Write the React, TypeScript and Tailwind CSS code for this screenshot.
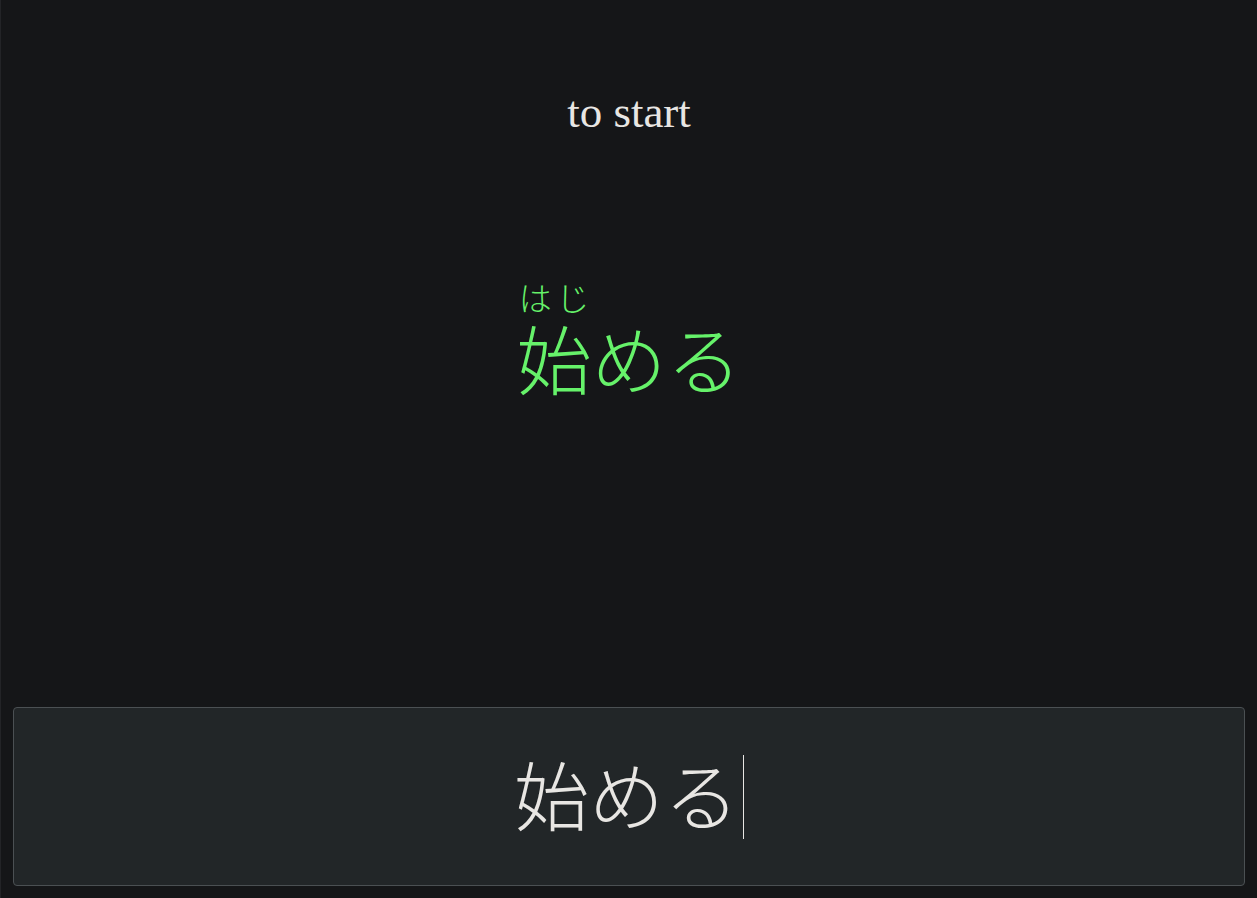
export default function App() {
  return (
    <div className="w-[1257px] h-[898px] bg-[#151618] flex flex-col border-l border-[#232427]">
      <div className="flex-1 flex flex-col items-center">
        <p className="mt-[85px] text-[45px] leading-[54px] text-[#e8e6e3] font-['Liberation_Serif',serif]">to start</p>
        <div className="mt-[137px] flex items-end text-[#66f26a] font-light font-['Noto_Sans_CJK_JP',sans-serif]">
          <div className="flex flex-col">
            <div className="flex justify-around text-[33px] leading-[43px]">
              <span>は</span>
              <span>じ</span>
            </div>
            <span className="text-[75px] leading-none">始</span>
          </div>
          <span className="text-[75px] leading-none">める</span>
        </div>
      </div>
      <div className="mx-[12px] mb-[12px] h-[179px] rounded-[4px] border border-[#4b5053] bg-[#222628] flex items-center justify-center">
        <span className="text-[75px] leading-none text-[#e8e6e3] font-light font-['Noto_Sans_CJK_JP',sans-serif] mb-[8px]">始める</span>
        <span className="ml-[4px] w-px h-[84px] bg-[#e8e6e3]" />
      </div>
    </div>
  );
}
